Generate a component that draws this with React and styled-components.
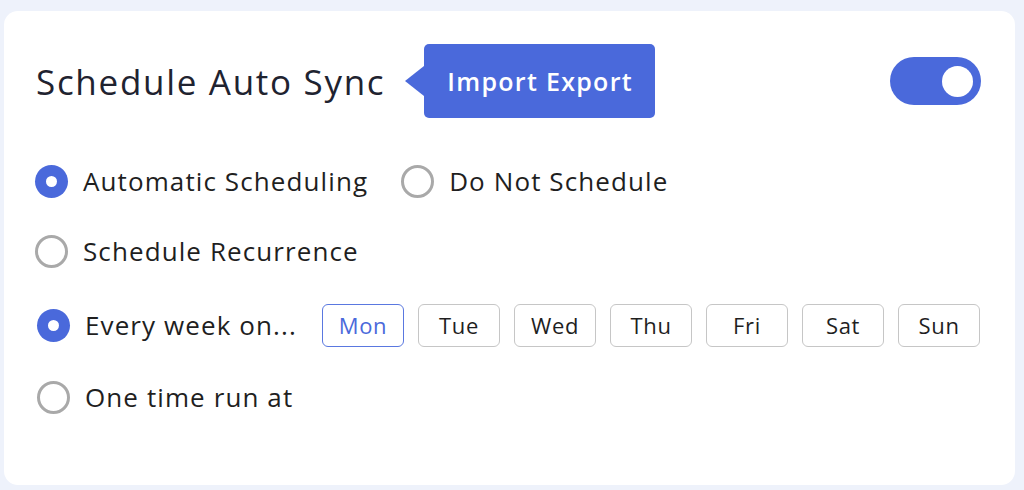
import React, { useState } from "react";
import styled, { createGlobalStyle } from "styled-components";

const GlobalStyle = createGlobalStyle`
  * { box-sizing: border-box; }
  body {
    margin: 0;
    background: #eef2fb;
    font-family: "Open Sans", "Lato", sans-serif;
  }
`;

const DAYS = ["Mon", "Tue", "Wed", "Thu", "Fri", "Sat", "Sun"];

function App() {
  const [mode, setMode] = useState("auto");
  const [recurrence, setRecurrence] = useState("weekly");
  const [day, setDay] = useState("Mon");
  const [enabled, setEnabled] = useState(true);

  return (
    <Page>
      <GlobalStyle />
      <Card>
        <Header>
          <Title>Schedule Auto Sync</Title>
          <Badge>Import Export</Badge>
          <Toggle $on={enabled} onClick={() => setEnabled(!enabled)}>
            <Knob />
          </Toggle>
        </Header>

        <Options>
          <Row>
            <Option onClick={() => setMode("auto")}>
              <Radio $checked={mode === "auto"} />
              <Label>Automatic Scheduling</Label>
            </Option>
            <Option $spaced onClick={() => setMode("none")}>
              <Radio $checked={mode === "none"} />
              <Label>Do Not Schedule</Label>
            </Option>
          </Row>
          <Row>
            <Option onClick={() => setMode("recurrence")}>
              <Radio $checked={mode === "recurrence"} />
              <Label>Schedule Recurrence</Label>
            </Option>
          </Row>
          <SubOptions>
            <Row $indent>
              <Option onClick={() => setRecurrence("weekly")}>
                <Radio $checked={recurrence === "weekly"} />
                <Label>Every week on...</Label>
              </Option>
              <Days>
                {DAYS.map((d) => (
                  <DayButton key={d} $active={day === d} onClick={() => setDay(d)}>
                    {d}
                  </DayButton>
                ))}
              </Days>
            </Row>
            <Row $indent>
              <Option onClick={() => setRecurrence("once")}>
                <Radio $checked={recurrence === "once"} />
                <Label>One time run at</Label>
              </Option>
            </Row>
          </SubOptions>
        </Options>
      </Card>
    </Page>
  );
}

const Page = styled.div`
  height: 490px;
  padding: 11px 9px 5px 4px;
`;

const Card = styled.div`
  height: 100%;
  background: #ffffff;
  border-radius: 14px;
  padding: 33px 34px 0 31px;
`;

const Header = styled.div`
  display: flex;
  align-items: center;
  height: 74px;
  padding-left: 1px;
`;

const Title = styled.h2`
  margin: 0 20px 0 0;
  font-size: 35px;
  font-weight: 400;
  letter-spacing: 1.7px;
  white-space: nowrap;
  color: #1f2330;
`;

const Badge = styled.div`
  position: relative;
  display: flex;
  align-items: center;
  height: 74px;
  margin-left: 19px;
  padding: 0 22px 0 23px;
  background: #4a69db;
  border-radius: 5px;
  color: #ffffff;
  font-size: 25px;
  font-weight: 600;
  letter-spacing: 1.3px;
  white-space: nowrap;

  &::before {
    content: "";
    position: absolute;
    left: -19px;
    top: 50%;
    transform: translateY(-50%);
    border-top: 15px solid transparent;
    border-bottom: 15px solid transparent;
    border-right: 19px solid #4a69db;
  }
`;

const Toggle = styled.button`
  margin-left: auto;
  display: flex;
  align-items: center;
  justify-content: ${(p) => (p.$on ? "flex-end" : "flex-start")};
  width: 91px;
  height: 48px;
  padding: 0 8px;
  border: none;
  border-radius: 24px;
  background: ${(p) => (p.$on ? "#4a69db" : "#c9cfdc")};
  cursor: pointer;
`;

const Knob = styled.span`
  width: 31px;
  height: 31px;
  border-radius: 50%;
  background: #ffffff;
`;

const Options = styled.div`
  display: flex;
  flex-direction: column;
  gap: 26px;
  margin-top: 41px;
`;

const SubOptions = styled.div`
  display: flex;
  flex-direction: column;
  gap: 28px;
  margin-top: 4px;
`;

const Row = styled.div`
  display: flex;
  align-items: center;
  height: 44px;
  padding-left: ${(p) => (p.$indent ? "2px" : "0")};
`;

const Option = styled.label`
  flex: none;
  display: flex;
  align-items: center;
  gap: 15px;
  margin-left: ${(p) => (p.$spaced ? "33px" : "0")};
  cursor: pointer;
`;

const Radio = styled.span`
  flex: none;
  width: 33px;
  height: 33px;
  border-radius: 50%;
  background: ${(p) => (p.$checked ? "#4a69db" : "#ffffff")};
  border: ${(p) => (p.$checked ? "none" : "3px solid #a9a9a9")};
  display: flex;
  align-items: center;
  justify-content: center;

  &::after {
    content: "";
    display: ${(p) => (p.$checked ? "block" : "none")};
    width: 11px;
    height: 11px;
    border-radius: 50%;
    background: #ffffff;
  }
`;

const Label = styled.span`
  font-size: 26px;
  letter-spacing: 1.1px;
  white-space: nowrap;
  color: #1f1f1f;
`;

const Days = styled.div`
  display: flex;
  gap: 14px;
  margin-left: auto;
  margin-right: 1px;
`;

const DayButton = styled.button`
  width: 82px;
  height: 43px;
  border-radius: 6px;
  border: 1.5px solid ${(p) => (p.$active ? "#5a78e0" : "#c6c6c6")};
  background: #ffffff;
  color: ${(p) => (p.$active ? "#4a69db" : "#1f1f1f")};
  font-family: inherit;
  font-size: 22px;
  letter-spacing: 0.7px;
  cursor: pointer;
`;

export default App;
